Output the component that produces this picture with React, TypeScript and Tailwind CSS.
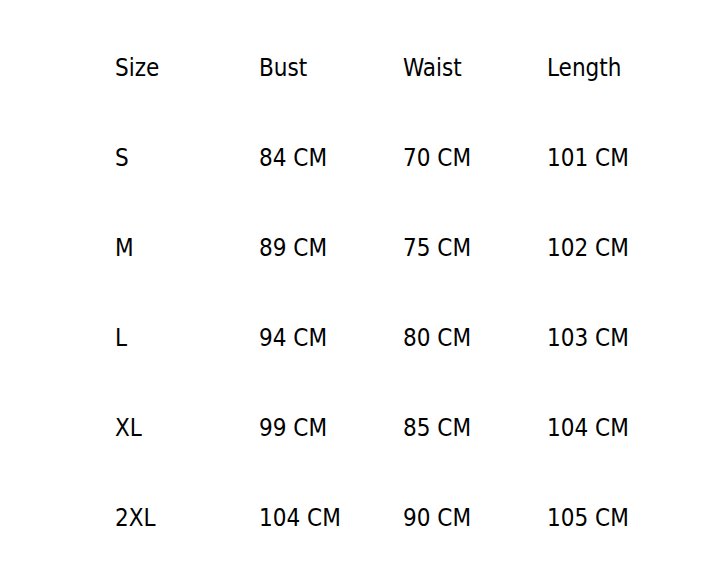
import React from 'react';

const rows: string[][] = [
  ['Size', 'Bust', 'Waist', 'Length'],
  ['S', '84 CM', '70 CM', '101 CM'],
  ['M', '89 CM', '75 CM', '102 CM'],
  ['L', '94 CM', '80 CM', '103 CM'],
  ['XL', '99 CM', '85 CM', '104 CM'],
  ['2XL', '104 CM', '90 CM', '105 CM'],
];

export default function App() {
  return (
    <div className="w-[720px] h-[585px] bg-white pt-[23px] pl-[115px] text-black font-['DejaVu_Sans_Condensed','DejaVu_Sans',sans-serif] text-[24px]">
      <div className="grid grid-cols-[144px_144px_144px_144px]">
        {rows.map((row, i) =>
          row.map((cell, j) => (
            <div key={`${i}-${j}`} className="h-[90px] leading-[90px] whitespace-nowrap">
              {cell}
            </div>
          ))
        )}
      </div>
    </div>
  );
}
